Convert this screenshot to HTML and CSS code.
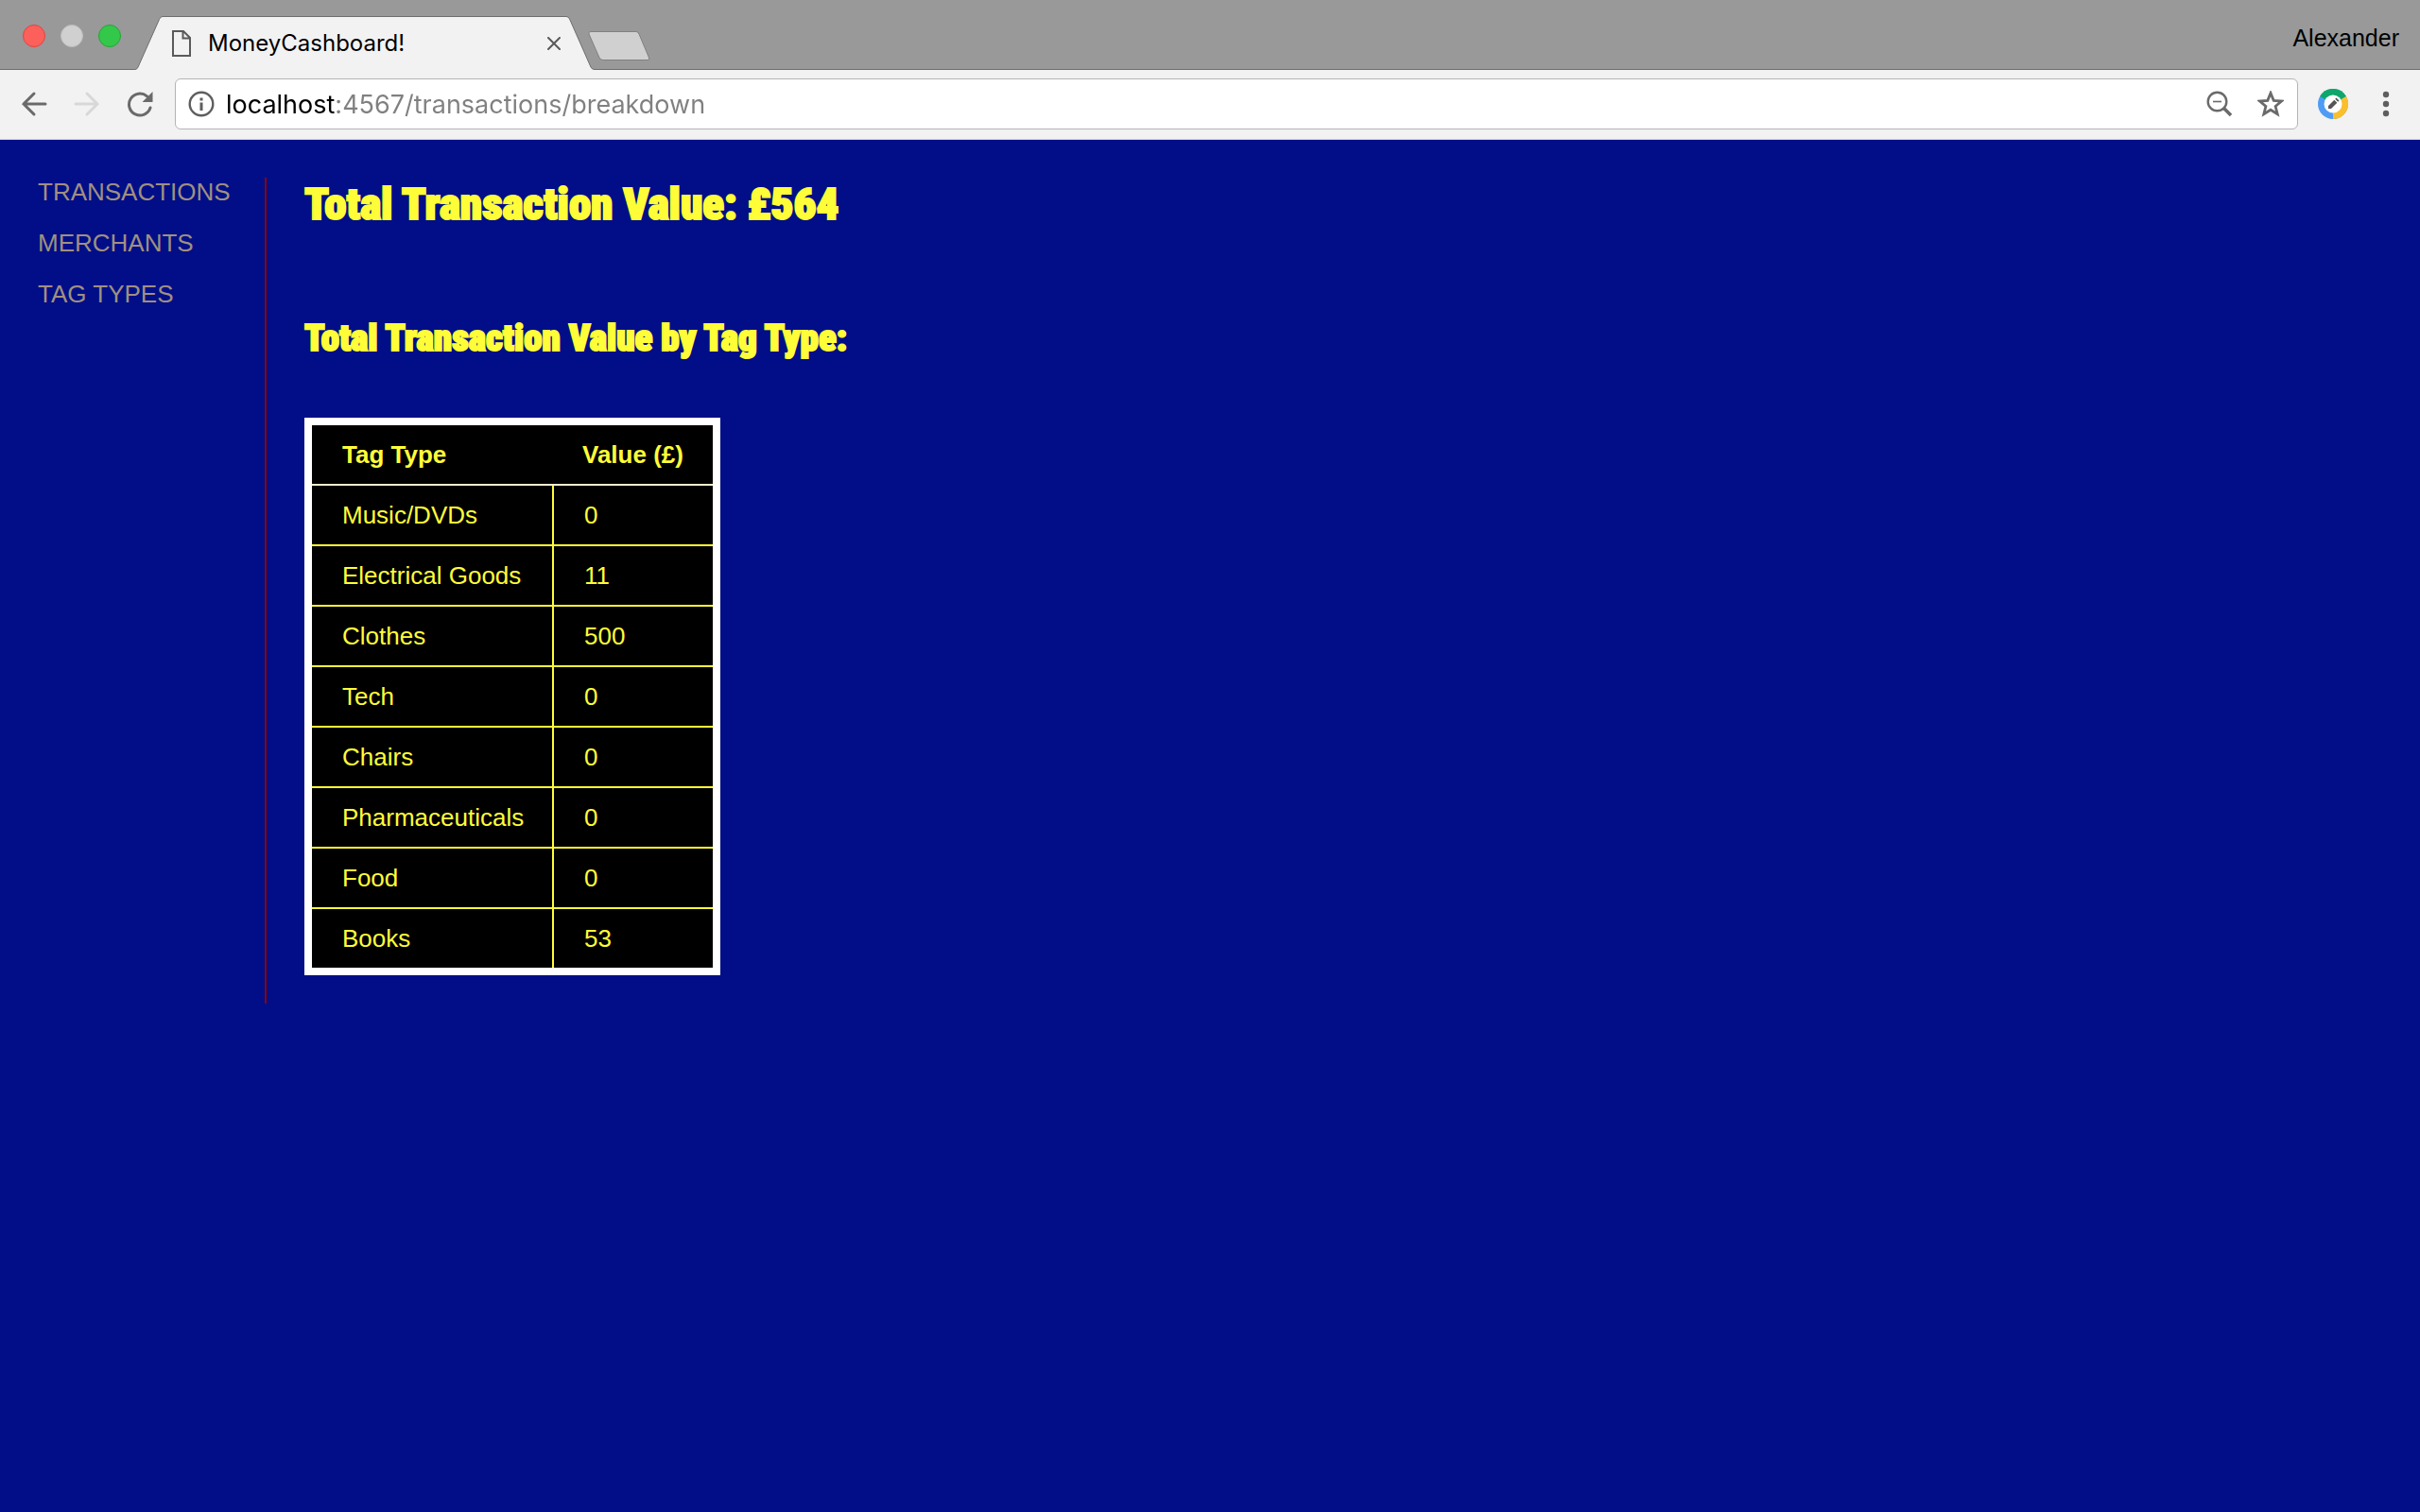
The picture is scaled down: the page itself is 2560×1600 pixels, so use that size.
FILE: index.html
```html
<!DOCTYPE html>
<html lang="en">
<head>
<meta charset="utf-8">
<meta name="viewport" content="width=device-width, initial-scale=1">
<title>MoneyCashboard!</title>
<link rel="stylesheet" href="styles.css">
</head>
<body>
<header class="browser">
  <div class="tab-strip">
    <div class="window-controls">
      <button class="light light-close" aria-label="Close window"></button>
      <button class="light light-minimise" aria-label="Minimise window"></button>
      <button class="light light-zoom" aria-label="Zoom window"></button>
    </div>
    <div class="tab">
      <svg class="tab-shape" viewBox="0 0 486 57" aria-hidden="true"><path d="M0 57V56.500Q2.500 56 3 54L25.500 3.500Q26.500.500 29 .500H456Q458.500.500 459.500 3L482 54Q483 56.500 486 56.500V57Z" fill="#f2f2f2"/><path d="M0 56.500Q2.500 56 3 54L25.500 3.500Q26.500.500 29 .500H456Q458.500.500 459.500 3L482 54Q483 56.500 486 56.500" fill="none" stroke="#6e6e6e"/></svg>
      <svg class="tab-page" viewBox="0 0 20 28" aria-hidden="true"><path d="M1 1H12L19 8V27H1ZM11.500 1V8.500H19" fill="none" stroke="#5a5a5a" stroke-width="2"/></svg>
      <span class="tab-title">MoneyCashboard!</span>
      <button class="tab-close" aria-label="Close tab"><svg viewBox="0 0 14 14"><path d="M1 1L13 13M13 1L1 13" stroke="#5a5a5a" stroke-width="2" stroke-linecap="round"/></svg></button>
    </div>
    <button class="new-tab" aria-label="New tab"><svg viewBox="0 0 66 32"><path d="M3 .500H51Q53 .500 54 3L64.500 28Q65.500 30.500 63 30.500H16Q13.500 30.500 12 28L1 3Q0 .500 3 .500Z" fill="#d0d0d0" stroke="#808080"/></svg></button>
    <button class="profile">Alexander</button>
  </div>
  <div class="toolbar">
    <button class="tool" aria-label="Back"><svg viewBox="0 0 28 28"><path d="M14 3L3 14L14 25M3 14H26" fill="none" stroke="#6a6a6a" stroke-width="3" stroke-linecap="round"/></svg></button>
    <button class="tool" aria-label="Forward"><svg viewBox="0 0 28 28"><path d="M14 3L25 14L14 25M25 14H2" fill="none" stroke="#d8d8d8" stroke-width="3" stroke-linecap="round"/></svg></button>
    <button class="tool" aria-label="Reload"><svg viewBox="0 0 28 28"><path d="M21.500 5.800A11.500 11.500 0 1 0 25 18" fill="none" stroke="#6a6a6a" stroke-width="3" stroke-linecap="round"/><path d="M27.500 1V12H16.500Z" fill="#6a6a6a"/></svg></button>
    <form class="address">
      <svg class="icon" viewBox="0 0 28 28" aria-hidden="true"><circle cx="14" cy="14" r="12.300" fill="none" stroke="#5e5e5e" stroke-width="2.400"/><path d="M14 12.500V21M14 7.500V10.500" stroke="#5e5e5e" stroke-width="3"/></svg>
      <input class="url" type="text" aria-label="Address" value="localhost:4567/transactions/breakdown" spellcheck="false">
      <button class="icon-button" type="button" aria-label="Zoom out"><svg viewBox="0 0 28 28"><circle cx="11.500" cy="11.500" r="9.800" fill="none" stroke="#6a6a6a" stroke-width="2.400"/><path d="M7 11.500H16" stroke="#6a6a6a" stroke-width="1.600"/><path d="M18.500 18.500L26 26" stroke="#6a6a6a" stroke-width="3.600"/></svg></button>
      <button class="icon-button" type="button" aria-label="Bookmark"><svg viewBox="0 0 28 28"><path d="M14 2.500L17.200 10.400L25.600 11L19.100 16.500L21.200 24.700L14 20.200L6.800 24.700L8.900 16.500L2.400 11L10.800 10.400Z" fill="none" stroke="#6a6a6a" stroke-width="2.800"/></svg></button>
    </form>
    <button class="extension" aria-label="Extension"><svg viewBox="0 0 32 32"><circle cx="16" cy="16" r="16" fill="#4f9cf5"/><path d="M16 16L2.100 8A16 16 0 0 1 29.900 8Z" fill="#0fa66b"/><path d="M16 16L29.900 8A16 16 0 0 1 16 32Z" fill="#fabf2d"/><circle cx="16" cy="16" r="9.500" fill="#fff"/><path d="M11 21V18L17.300 11.700L20.300 14.700L14 21ZM18.200 10.800L19.500 9.500L22.500 12.500L21.200 13.800Z" fill="#555"/></svg></button>
    <button class="menu" aria-label="Menu"><svg viewBox="0 0 8 28"><circle cx="4" cy="4" r="3.200" fill="#5e5e5e"/><circle cx="4" cy="14" r="3.200" fill="#5e5e5e"/><circle cx="4" cy="24" r="3.200" fill="#5e5e5e"/></svg></button>
  </div>
</header>
<div class="page">
  <nav class="sidebar">
    <a href="#transactions">TRANSACTIONS</a>
    <a href="#merchants">MERCHANTS</a>
    <a href="#tags">TAG TYPES</a>
  </nav>
  <main class="content">
    <h1>Total Transaction Value: £564</h1>
    <h2>Total Transaction Value by Tag Type:</h2>
    <table class="breakdown">
      <thead><tr><th scope="col">Tag Type</th><th scope="col">Value (£)</th></tr></thead>
      <tbody>
        <tr><td>Music/DVDs</td><td>0</td></tr>
        <tr><td>Electrical Goods</td><td>11</td></tr>
        <tr><td>Clothes</td><td>500</td></tr>
        <tr><td>Tech</td><td>0</td></tr>
        <tr><td>Chairs</td><td>0</td></tr>
        <tr><td>Pharmaceuticals</td><td>0</td></tr>
        <tr><td>Food</td><td>0</td></tr>
        <tr><td>Books</td><td>53</td></tr>
      </tbody>
    </table>
  </main>
</div>
</body>
</html>
```
FILE: styles.css
```css
* {
  box-sizing: border-box;
}

body {
  margin: 0;
  min-height: 100vh;
  background: #010e88;
  font-family: "Liberation Sans", Arial, sans-serif;
  font-size: 26px;
}

button {
  margin: 0;
  padding: 0;
  border: 0;
  background: none;
  font: inherit;
  color: inherit;
}

svg {
  display: block;
  width: 100%;
  height: 100%;
}

/* Browser chrome */
.tab-strip {
  display: flex;
  align-items: flex-start;
  height: 74px;
  padding-right: 22px;
  background: #999;
  box-shadow: inset 0 -1px #6e6e6e;
}

.window-controls {
  display: flex;
  gap: 16px;
  width: 143px;
  padding: 26px 0 0 24px;
}

.light {
  width: 24px;
  height: 24px;
  border: 1px solid;
  border-radius: 50%;
}

.light-close {
  background: #fc605b;
  border-color: #e0443e;
}

.light-minimise {
  background: #d0d0d0;
  border-color: #bdbdbd;
}

.light-zoom {
  background: #34c84a;
  border-color: #24a536;
}

.tab {
  position: relative;
  display: flex;
  align-items: center;
  width: 486px;
  height: 57px;
  margin-top: 17px;
  padding: 0 36px 0 39px;
}

.tab-shape {
  position: absolute;
  inset: 0;
}

.tab-page {
  position: relative;
  width: 20px;
  height: 28px;
}

.tab-title {
  position: relative;
  flex: 1;
  padding-left: 18px;
  font-family: Inter, sans-serif;
  font-size: 24px;
}

.tab-close {
  position: relative;
  width: 14px;
  height: 14px;
}

.new-tab {
  position: relative;
  width: 66px;
  height: 32px;
  margin: 33px auto 0 -7px;
}

.profile {
  padding-top: 26px;
  font-size: 25px;
  line-height: 28px;
}

.toolbar {
  display: flex;
  align-items: center;
  height: 74px;
  padding: 0 32px 2px 22px;
  border-bottom: 1px solid #d2d2d2;
  background: #f2f2f2;
}

.tool {
  width: 28px;
  height: 28px;
  margin-right: 28px;
}

.address {
  display: flex;
  flex: 1;
  align-items: center;
  height: 54px;
  margin-left: -5px;
  padding: 0 14px 0 13px;
  border: 1px solid #b4b4b4;
  border-radius: 6px;
  background: #fff;
}

.icon {
  width: 28px;
  height: 28px;
}

.url {
  flex: 1;
  height: 50px;
  margin: 0;
  padding: 2px 0 0 12px;
  border: 0;
  outline: 0;
  font-family: Inter, sans-serif;
  font-size: 27px;
  color: transparent;
  background: linear-gradient(to right, #000 129px, #808080 129px);
  -webkit-background-clip: text;
  background-clip: text;
}

.icon-button {
  width: 28px;
  height: 28px;
  margin-left: 26px;
}

.extension {
  width: 32px;
  height: 32px;
  margin: 0 36px 0 21px;
}

.menu {
  width: 8px;
  height: 28px;
}

/* Page */
.page {
  display: flex;
  padding: 40px 40px 0;
}

.sidebar {
  display: flex;
  flex-direction: column;
  gap: 24px;
  width: 240px;
}

.sidebar a {
  color: #a09080;
  line-height: 30px;
  text-decoration: none;
}

.content {
  flex: 1;
  padding: 0 0 30px 40px;
  border-left: 2px solid #8b0000;
  color: #fffd38;
}

h1,
h2 {
  margin: 0;
  font-family: Impact, "Roboto Condensed", Roboto, sans-serif;
  font-weight: 900;
  -webkit-text-stroke: 2px;
}

h1 {
  padding-bottom: 90px;
  font-size: 47px;
  line-height: 56px;
}

h2 {
  padding-bottom: 60px;
  font-size: 39px;
  line-height: 48px;
}

.breakdown {
  width: 440px;
  border: 8px solid #fff;
  border-spacing: 0;
  background: #000;
  table-layout: fixed;
}

.breakdown th,
.breakdown td {
  padding: 16px 24px 16px 32px;
  line-height: 30px;
  text-align: left;
}

.breakdown th {
  border-bottom: 2px solid #ffebcd;
}

.breakdown th:first-child {
  width: 254px;
}

.breakdown td {
  border-bottom: 2px solid #fffd38;
}

.breakdown td + td {
  border-left: 2px solid #fffd38;
}

.breakdown tr:last-child td {
  border-bottom: 0;
}
```
